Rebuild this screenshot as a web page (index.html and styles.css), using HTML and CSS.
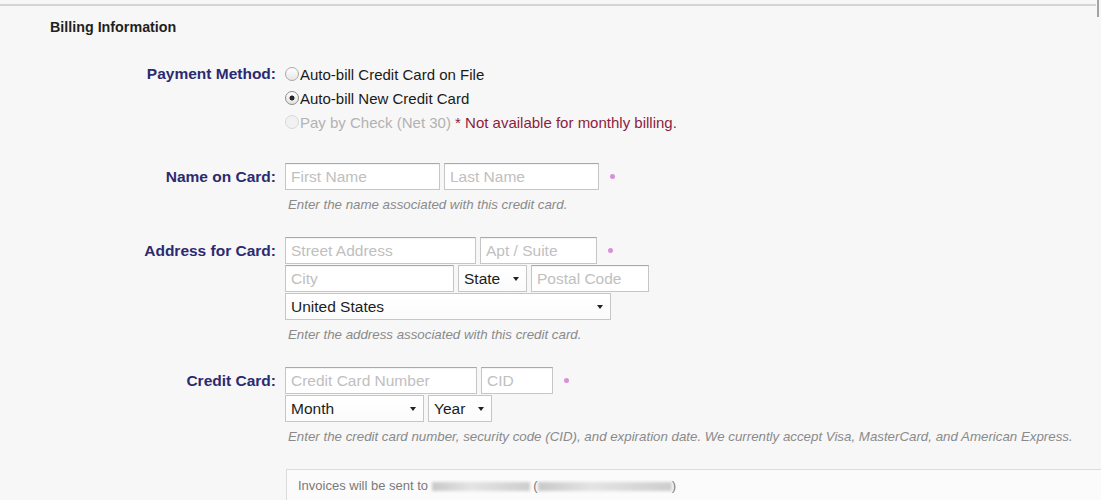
FILE: index.html
```html
<!DOCTYPE html>
<html lang="en">
  <head>
    <meta charset="UTF-8" />
    <meta name="viewport" content="width=device-width, initial-scale=1.0" />
    <title>Billing Information</title>
    <link rel="stylesheet" href="styles.css">
  </head>
  <body>
    <div class="topbar">
      <div class="topbar-rule"></div>
      <div class="topbar-edge"></div>
    </div>

    <h2 class="section-title">Billing Information</h2>

    <form class="billing">
      <div class="field field-payment">
        <div class="field-label">Payment Method:</div>
        <div class="field-body">
          <label class="choice">
            <input type="radio" name="method" class="radio" />
            <span>Auto-bill Credit Card on File</span>
          </label>
          <label class="choice">
            <input type="radio" name="method" class="radio" checked />
            <span>Auto-bill New Credit Card</span>
          </label>
          <label class="choice is-disabled">
            <input type="radio" name="method" class="radio" disabled />
            <span>Pay by Check (Net 30) <span class="choice-note">* Not available for monthly billing.</span></span>
          </label>
        </div>
      </div>

      <div class="field">
        <div class="field-label">Name on Card:</div>
        <div class="field-body">
          <div class="rows">
            <div class="row">
              <input class="text-input input-name" type="text" placeholder="First Name" />
              <input class="text-input input-name" type="text" placeholder="Last Name" />
              <span class="required"></span>
            </div>
          </div>
          <p class="hint">Enter the name associated with this credit card.</p>
        </div>
      </div>

      <div class="field">
        <div class="field-label">Address for Card:</div>
        <div class="field-body">
          <div class="rows">
            <div class="row">
              <input class="text-input input-street" type="text" placeholder="Street Address" />
              <input class="text-input input-apt" type="text" placeholder="Apt / Suite" />
              <span class="required"></span>
            </div>
            <div class="row">
              <input class="text-input input-city" type="text" placeholder="City" />
              <div class="select select-state"><span>State</span><span class="caret"></span></div>
              <input class="text-input input-postal" type="text" placeholder="Postal Code" />
            </div>
            <div class="row">
              <div class="select select-country"><span>United States</span><span class="caret"></span></div>
            </div>
          </div>
          <p class="hint">Enter the address associated with this credit card.</p>
        </div>
      </div>

      <div class="field">
        <div class="field-label">Credit Card:</div>
        <div class="field-body">
          <div class="rows">
            <div class="row">
              <input class="text-input input-card" type="text" placeholder="Credit Card Number" />
              <input class="text-input input-cid" type="text" placeholder="CID" />
              <span class="required"></span>
            </div>
            <div class="row">
              <div class="select select-month"><span>Month</span><span class="caret"></span></div>
              <div class="select select-year"><span>Year</span><span class="caret"></span></div>
            </div>
          </div>
          <p class="hint">Enter the credit card number, security code (CID), and expiration date. We currently accept Visa, MasterCard, and American Express.</p>
        </div>
      </div>

      <div class="invoices">
        Invoices will be sent to <span class="redacted redacted-name"></span> (<span class="redacted redacted-email"></span>)
      </div>
    </form>
  </body>
</html>
```

FILE: styles.css
```css
* {
  box-sizing: border-box;
}

body {
  margin: 0;
  background: #f7f7f7;
  font-family: "Liberation Sans", Arial, sans-serif;
  color: #222;
}

/* thin frame along the top of the panel */
.topbar {
  display: flex;
  align-items: flex-start;
  height: 17px;
}

.topbar-rule {
  flex: 1;
  margin-top: 4px;
  border-top: 2px solid #d4d4d4;
}

.topbar-edge {
  width: 2px;
  height: 17px;
  margin: 0 2px 0 1px;
  background: #a3a3a3;
}

.section-title {
  margin: 1px 0 0 50px;
  font-size: 14.3px;
  line-height: 18px;
  font-weight: bold;
  color: #1f1f1f;
}

.billing {
  margin-top: 26px;
}

/* label column + controls column */
.field {
  display: grid;
  grid-template-columns: 276px 1fr;
  column-gap: 9px;
  margin-bottom: 24px;
}

.field-label {
  text-align: right;
  font-size: 15.5px;
  font-weight: bold;
  line-height: 27px;
  color: #2c2a70;
}

.field-payment {
  margin-bottom: 29px;
}

.field-payment .field-label {
  line-height: 24px;
}

.choice {
  display: flex;
  align-items: center;
  height: 24px;
  font-size: 15px;
  color: #1a1a1a;
}

.radio {
  appearance: none;
  -webkit-appearance: none;
  width: 14px;
  height: 14px;
  margin: 0 1px 0 0;
  border: 1px solid #a9a9a9;
  border-radius: 50%;
  background: linear-gradient(#ffffff, #e6e6e6);
}

.radio:checked {
  border-color: #8c8c8c;
  background: radial-gradient(circle, #262626 0 2.2px, transparent 2.8px),
    linear-gradient(#ffffff, #e2e2e2);
}

.radio:disabled {
  border-color: #d9d9d9;
  background: #f1f1f1;
}

.is-disabled {
  color: #b2b2b2;
}

.choice-note {
  color: #8c1d40;
}

/* inputs */
.rows {
  display: flex;
  flex-direction: column;
  gap: 1px;
}

.row {
  display: flex;
  align-items: center;
  gap: 4px;
}

.text-input {
  height: 27px;
  margin: 0;
  padding: 0 5px;
  border: 1px solid #c6c6c6;
  border-top-color: #a9a9a9;
  border-radius: 0;
  background: #ffffff;
  box-shadow: inset 0 1px 1px rgba(0, 0, 0, 0.05);
  font-family: "Liberation Sans", Arial, sans-serif;
  font-size: 15.5px;
  color: #222;
}

.text-input::placeholder {
  color: #c0c0c0;
}

.select {
  height: 27px;
  display: flex;
  align-items: center;
  justify-content: space-between;
  padding: 0 7px 0 5px;
  border: 1px solid #c6c6c6;
  background: linear-gradient(#ffffff, #fbfbfb);
  font-size: 15.5px;
  color: #1c1c1c;
}

.caret {
  width: 0;
  height: 0;
  border-left: 3.5px solid transparent;
  border-right: 3.5px solid transparent;
  border-top: 4px solid #222;
}

.input-name {
  width: 155px;
}

.input-street {
  width: 191px;
}

.input-apt {
  width: 117px;
}

.input-city {
  width: 169px;
}

.select-state {
  width: 69px;
}

.input-postal {
  width: 118px;
}

.select-country {
  width: 326px;
}

.input-card {
  width: 192px;
}

.input-cid {
  width: 72px;
}

.select-month {
  width: 139px;
}

.select-year {
  width: 64px;
}

.required {
  width: 5px;
  height: 5px;
  margin-left: 7px;
  border-radius: 50%;
  background: #d890d9;
}

.hint {
  margin: 7px 0 0;
  padding-left: 3px;
  font-size: 13.3px;
  font-style: italic;
  line-height: 16px;
  color: #8a8a8a;
}

/* invoice recipient box */
.invoices {
  margin-left: 286px;
  padding: 8px 11px 20px;
  border-top: 1px solid #dcdcdc;
  border-left: 1px solid #dcdcdc;
  background: #fbfbfb;
  font-size: 13px;
  line-height: 16px;
  color: #7a7a7a;
}

.redacted {
  display: inline-block;
  height: 9px;
  vertical-align: middle;
  background: linear-gradient(90deg, #c8c8c8, #e4e4e4 40%, #cdcdcd);
  filter: blur(1.5px);
}

.redacted-name {
  width: 98px;
}

.redacted-email {
  width: 134px;
}
```
